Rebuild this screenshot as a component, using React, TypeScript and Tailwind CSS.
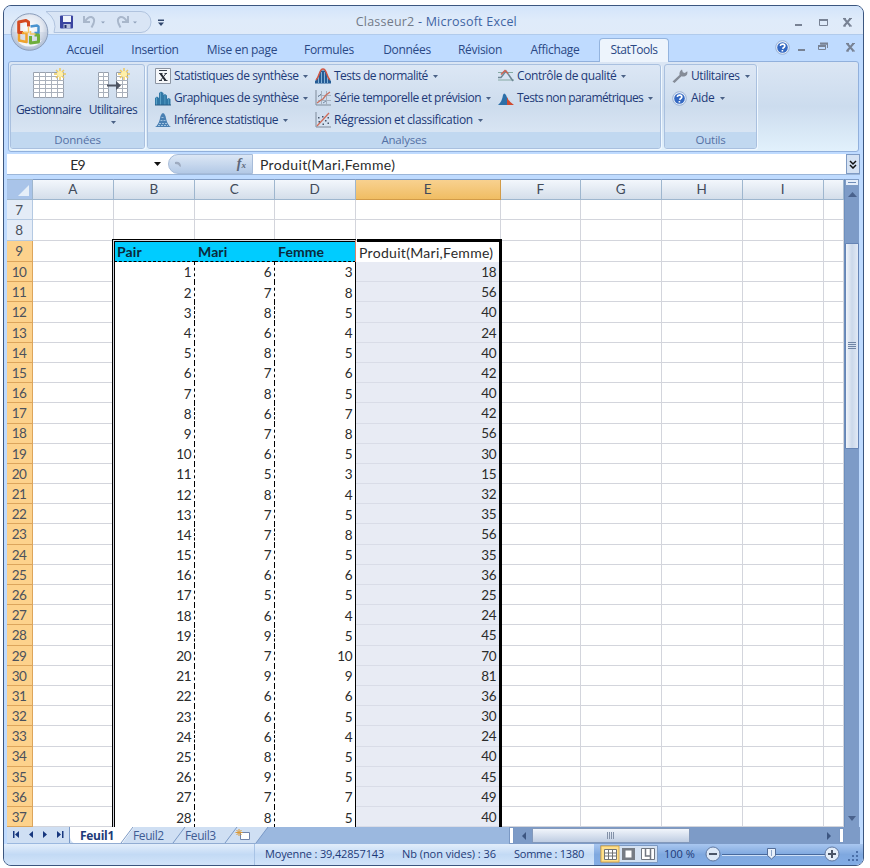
import type { ReactNode } from 'react';
import clsx from 'clsx';

const products = [
  [6, 3, 18], [7, 8, 56], [8, 5, 40], [6, 4, 24], [8, 5, 40], [7, 6, 42], [8, 5, 40],
  [6, 7, 42], [7, 8, 56], [6, 5, 30], [5, 3, 15], [8, 4, 32], [7, 5, 35], [7, 8, 56],
  [7, 5, 35], [6, 6, 36], [5, 5, 25], [6, 4, 24], [9, 5, 45], [7, 10, 70], [9, 9, 81],
  [6, 6, 36], [6, 5, 30], [6, 4, 24], [8, 5, 40], [9, 5, 45], [7, 7, 49], [8, 5, 40],
];

const columns = [
  { name: 'A', width: 'w-[81px]' },
  { name: 'B', width: 'w-[81px]' },
  { name: 'C', width: 'w-[80px]' },
  { name: 'D', width: 'w-[81px]' },
  { name: 'E', width: 'w-[145px]' },
  { name: 'F', width: 'w-[80px]' },
  { name: 'G', width: 'w-[81px]' },
  { name: 'H', width: 'w-[81px]' },
  { name: 'I', width: 'w-[81px]' },
  { name: '', width: 'w-[20px]' },
];

const tabs = [
  { label: 'Accueil', width: 'w-[60px]' },
  { label: 'Insertion', width: 'w-[80px]' },
  { label: 'Mise en page', width: 'w-[94px]' },
  { label: 'Formules', width: 'w-[80px]' },
  { label: 'Données', width: 'w-[76px]' },
  { label: 'Révision', width: 'w-[70px]' },
  { label: 'Affichage', width: 'w-[80px]' },
];

function Caret({ className }: { className?: string }) {
  return (
    <svg viewBox="0 0 5 3" className={clsx('h-[3px] w-[5px] shrink-0', className)}>
      <path d="M0 0h5L2.5 3z" fill="#4a6186" />
    </svg>
  );
}

function OfficeButton() {
  return (
    <svg viewBox="0 0 40 40" className="absolute left-[6px] top-[6px] h-10 w-10">
      <defs>
        <radialGradient id="orb" cx="50%" cy="40%" r="60%">
          <stop offset="0" stopColor="#ffffff" />
          <stop offset="0.6" stopColor="#e3e8f1" />
          <stop offset="1" stopColor="#a9b8cf" />
        </radialGradient>
      </defs>
      <circle cx="19.500" cy="20" r="18.300" fill="url(#orb)" stroke="#8b9dba" />
      <path d="M2 20h35a17.500 17.500 0 0 1-35 0z" fill="#b9c6da" opacity="0.350" />
      <path d="M7 28a14 12 0 0 0 25 0q-12 7-25 0z" fill="#fff" opacity="0.800" />
      <g fill="none" strokeLinejoin="round">
        <path d="M13 20.500H8.700V10l7.300-1.500 2.500 1.500v4.500" stroke="#d4491f" strokeWidth="3" />
        <path d="M20.500 14.500l6.500-1 1.500 1v6.500h-4" stroke="#4a93cf" strokeWidth="2.500" />
        <path d="M9 22v6.500l7.500 1.500V21H12" stroke="#f0a32c" strokeWidth="2.500" />
        <path d="M20.500 24v7l8-1v-7h-4" stroke="#6fae3c" strokeWidth="3" />
        <path d="M18.500 15v5.500H14M20.500 19v3h5" stroke="#f6c667" strokeWidth="1.500" />
      </g>
    </svg>
  );
}

function QuickAccess() {
  return (
    <svg viewBox="0 0 130 24" className="absolute left-[41px] top-[4px] h-6 w-[130px]">
      <path d="M1 1.500h95a10 10.500 0 0 1 0 21H9Q13 10 1 1.500z" fill="#d9e5f5" stroke="#b0c3de" />
      <rect x="15" y="5.500" width="13" height="13" rx="1" fill="#3a44a0" />
      <rect x="18" y="6" width="8" height="6" fill="#f1f4fb" />
      <rect x="18.500" y="14" width="7" height="4.500" fill="#b9c2dd" />
      <rect x="19.500" y="15" width="2" height="3" fill="#27306f" />
      <g fill="none" stroke="#a9b7cb" strokeWidth="2">
        <path d="M39 6v6h6M40 11.500q3-5 6.500-4.500 4 1.500 2 6.500l-2 4" />
        <path d="M83 6v6h-6M82 11.500q-3-5-6.500-4.500-4 1.500-2 6.500l2 4" />
      </g>
      <path d="M56 11.500h4l-2 2zM88 11.500h4l-2 2z" fill="#8fa0ba" />
      <path d="M113 9.500h6v1.500h-6zM113 12.500h6l-3 3.500z" fill="#33486e" />
    </svg>
  );
}

function HelpIcon({ className }: { className?: string }) {
  return (
    <svg viewBox="0 0 15 15" className={clsx('h-[15px] w-[15px] shrink-0', className)}>
      <circle cx="7.500" cy="7.500" r="6.800" fill="#e4edf9" stroke="#8ba4cc" strokeWidth="0.800" />
      <circle cx="7.500" cy="7.500" r="5.300" fill="#3468c2" />
      <path d="M5.200 5.900Q5.600 4 7.800 4.100q2.400.4 2 2.200-.3 1-1.700 1.600l-.3 1M7.400 10v1.600" fill="none" stroke="#fff" strokeWidth="1.600" />
    </svg>
  );
}

function WindowButtons({ restore }: { restore?: boolean }) {
  return (
    <svg viewBox="0 0 62 12" className="h-3 w-[62px]">
      <path d="M1 8h7v2H1z" fill="#788294" />
      {restore ? (
        <>
          <path d="M23.500 3h7v4M21.500 4.500h7v4h-7z" fill="none" stroke="#788294" />
          <path d="M23 2.500h8M21 5h8" stroke="#788294" strokeWidth="2" />
        </>
      ) : (
        <>
          <path d="M25.500 3.500h8v6h-8z" fill="none" stroke="#788294" />
          <path d="M25 4h9" stroke="#788294" strokeWidth="2" />
        </>
      )}
      <path d="M50 2.500l6.500 7.500M56.500 2.500L50 10" stroke="#788294" strokeWidth="2" />
      <path d="M49 2.500h3M55 2.500h3M49 10h3M55 10h3" stroke="#788294" />
    </svg>
  );
}

function TableIcon({ split }: { split?: boolean }) {
  const rows = [9, 13, 17, 21, 25];
  return (
    <svg viewBox="0 0 34 34" className="h-[34px] w-[34px]">
      {split ? (
        <>
          <path d="M2.500 5.500h10v25h-10zM20.500 5.500h11v25h-11z" fill="#fff" stroke="#98a1ae" />
          <path d={rows.map((y) => `M2 ${y + 0.5}h11M20 ${y + 0.5}h12`).join('')} stroke="#aab1bc" />
          <path d="M7.500 5v26M26.500 5v26" stroke="#aab1bc" />
          <path d="M11 17.500h9V14l5 4.500-5 4.500v-3.500h-9z" fill="#4e5563" />
        </>
      ) : (
        <>
          <path d="M1.500 5.500h30v25h-30z" fill="#fff" stroke="#98a1ae" />
          <path d={rows.map((y) => `M1 ${y + 0.5}h31`).join('')} stroke="#aab1bc" />
          <path d="M7.500 5v26M13.500 5v26M19.500 5v26M25.500 5v26" stroke="#aab1bc" />
        </>
      )}
      <path d="M28 1v12M22 7h12M24 3l8 8M32 3l-8 8" stroke="#ecc95f" strokeWidth="1.500" />
      <circle cx="28" cy="7" r="3" fill="#fff0a8" />
    </svg>
  );
}

const icons: Record<string, ReactNode> = {
  mean: (
    <>
      <path d="M.5.500h15v15H.5z" fill="#f5f7fa" stroke="#8b94a2" />
      <path d="M4 2.500h8" stroke="#333a45" />
      <path d="M5.500 5.500l5 7" stroke="#20242c" strokeWidth="2" />
      <path d="M11 5.500l-5.500 7M4 5.500h3.500M9.500 5.500H12M4 12.500h3M9 12.500h3.500" stroke="#333a45" />
    </>
  ),
  bars: (
    <>
      <path d="M0 15V8l2-1.500L4 8V3l2-1.500L8.500 3v2L10 4l2 1.500V9l1.500-1L15.500 9v6z" fill="#3178a6" />
      <path d="M1 15V8l1-1v8zM5 15V3l1-1v13zM9.500 15V5.500l.8-.5v10zM13 15V9l.8-.5V15z" fill="#5ba0c6" />
      <path d="M0 15h16" stroke="#285a84" />
    </>
  ),
  inference: (
    <>
      <path d="M0 15q4-2 5.500-11Q8-2 10.500 4 12 13 16 15z" fill="#4a80b3" />
      <path d="M4 11.500h8M5.500 8.500h5M3 13.500h10M6.500 5.500h3" stroke="#9fc1de" strokeDasharray="2 1" />
    </>
  ),
  normality: (
    <>
      <path d="M0 15.500V13l2-2 2-5 2-3.500h4L12 6l2 5 2 2v2.500z" fill="#245c96" />
      <path d="M3.500 15V9M6.500 15V4M9.500 15V4M12.500 15V9" stroke="#83b1d7" />
      <path d="M1 12C5 8 4 1 8 1s3 7 7 11" fill="none" stroke="#cf5644" strokeWidth="1.500" />
    </>
  ),
  series: (
    <>
      <path d="M1 0v15h15" fill="none" stroke="#7f8b9b" />
      <path d="M6.500 1v14M11.500 1v14M3 5.500h13M3 10.500h13" fill="none" stroke="#a5b0be" />
      <path d="M2 13l4-3 2-1 3-4 4-3" fill="none" stroke="#c8705f" strokeWidth="1.300" />
      <path d="M3 7l3-3M8 13l3-2" fill="none" stroke="#7489a2" />
    </>
  ),
  regression: (
    <>
      <path d="M1 0v15h15" fill="none" stroke="#7f8b9b" />
      <path d="M2 14L14 1" stroke="#cf6b58" strokeWidth="1.300" />
      <path d="M3 5h1.500v1.500H3zM3.500 9H5v1.500H3.500zM7 4h1.500v1.500H7zM7.500 11.500H9V13H7.500zM12.500 5H14v1.500h-1.500zM12.500 10.500H14V12h-1.500zM10 8h1.500v1.500H10z" fill="#47566b" />
    </>
  ),
  control: (
    <>
      <path d="M0 4.500h15M0 12h16" stroke="#86a9a3" />
      <path d="M0 9.500h3L8 3l7 10" fill="none" stroke="#6f8795" strokeWidth="1.500" />
      <path d="M3 6.500l4-4 3 3" fill="none" stroke="#ce6352" strokeWidth="1.500" />
    </>
  ),
  nonparam: (
    <>
      <path d="M0 15q4-3 5-10 1-3 3 0l2 5v5z" fill="#2d6fa8" />
      <path d="M9 7q2 5 7 8H9z" fill="#cf4b30" />
    </>
  ),
  wrench: (
    <path d="M.5 13.500l7-6.500Q7 3 10 1.500l.8 2.800 2 .7 2.500-1.800Q16 7 13 8.200q-2 .6-3.500 0l-7 6.800z" fill="#858c98" />
  ),
};

function Command({ icon, label, tracking }: { icon: string; label: string; tracking: string }) {
  return (
    <div className="flex h-[22px] items-center whitespace-nowrap">
      {icon === 'help' ? (
        <HelpIcon className="mr-1" />
      ) : (
        <svg viewBox="0 0 16 16" className="mr-[3px] h-4 w-4 shrink-0">{icons[icon]}</svg>
      )}
      <span className={tracking}>{label}</span>
      <Caret className="ml-[5px]" />
    </div>
  );
}

function Group({ title, className, children }: { title: string; className: string; children: ReactNode }) {
  return (
    <div className={clsx('flex h-[85px] flex-col overflow-hidden rounded-[3px] border border-[#a9c0df] bg-linear-to-b from-[#dce7f5] via-[#cddced] to-[#dfeaf7] shadow-[1px_1px_0_#f0f8ff]', className)}>
      <div className="h-[67px]">{children}</div>
      <div className="flex h-4 items-center justify-center bg-[#c1d8f0] text-[11.500px] tracking-[-0.200px] text-[#5571a5]">{title}</div>
    </div>
  );
}

function Ribbon() {
  return (
    <div className="mx-1 flex h-[91px] rounded-[3px] border border-[#91b0dc] bg-linear-to-b from-[#dbe6f4] via-[#ccdcee] to-[#e2f1fc] pl-px pt-[2px] text-[12px] text-[#1d3a78]">
      <Group title="Données" className="w-[135px]">
        <div className="flex pt-[2px]">
          <div className="flex w-[75px] flex-col items-center">
            <TableIcon />
            <span className="tracking-[-0.550px]">Gestionnaire</span>
          </div>
          <div className="flex w-[54px] flex-col items-center">
            <TableIcon split />
            <span className="tracking-[-0.450px]">Utilitaires</span>
            <Caret className="mt-[2px]" />
          </div>
        </div>
      </Group>
      <Group title="Analyses" className="ml-[2px] w-[514px]">
        <div className="flex pl-[7px]">
          <div className="w-[160px]">
            <Command icon="mean" label="Statistiques de synthèse" tracking="tracking-[-0.450px]" />
            <Command icon="bars" label="Graphiques de synthèse" tracking="tracking-[-0.500px]" />
            <Command icon="inference" label="Inférence statistique" tracking="tracking-[-0.500px]" />
          </div>
          <div className="w-[183px]">
            <Command icon="normality" label="Tests de normalité" tracking="tracking-[-0.550px]" />
            <Command icon="series" label="Série temporelle et prévision" tracking="tracking-[-0.470px]" />
            <Command icon="regression" label="Régression et classification" tracking="tracking-[-0.400px]" />
          </div>
          <div>
            <Command icon="control" label="Contrôle de qualité" tracking="tracking-[-0.400px]" />
            <Command icon="nonparam" label="Tests non paramétriques" tracking="tracking-[-0.600px]" />
          </div>
        </div>
      </Group>
      <Group title="Outils" className="ml-[3px] w-[93px]">
        <div className="pl-[7px]">
          <Command icon="wrench" label="Utilitaires" tracking="tracking-[-0.450px]" />
          <Command icon="help" label="Aide" tracking="tracking-[-0.300px]" />
        </div>
      </Group>
    </div>
  );
}

function FormulaBar() {
  return (
    <div className="mx-[3px] mt-[2px] flex h-[21px] border-b border-[#9cb6d8] bg-white text-[14px] text-[#2b2b2b]">
      <div className="w-[141px] pt-px text-center font-['Lato',sans-serif] leading-5 tracking-[-0.800px]">E9</div>
      <div className="flex w-5 items-center">
        <svg viewBox="0 0 7 4" className="ml-[6px] h-1 w-[7px]"><path d="M0 0h7L3.500 4z" fill="#111" /></svg>
      </div>
      <div className="flex w-[85px] items-center justify-between rounded-l-full border border-[#a7bcd9] bg-linear-to-b from-[#dce7f5] to-[#b3c9e6] pl-[6px] pr-[6px]">
        <svg viewBox="0 0 7 7" className="h-[7px] w-[7px]"><path d="M0 1q6-1 6 5l-2-1q0-2-4-2z" fill="#9eabc0" /></svg>
        <span className="font-['Liberation_Serif',serif] text-[14px] font-bold italic leading-none text-[#5d6779]">f<span className="text-[9px]">x</span></span>
      </div>
      <div className="flex-1 pl-[7px] pt-px font-['Lato',sans-serif] leading-5 tracking-[0.350px]">Produit(Mari,Femme)</div>
      <div className="flex w-[14px] items-center justify-center border border-[#7f9bc4] bg-[#d5e2f3]">
        <svg viewBox="0 0 8 9" className="h-[9px] w-2"><path d="M1 1l3 3 3-3M1 5l3 3 3-3" fill="none" stroke="#111" strokeWidth="1.500" /></svg>
      </div>
    </div>
  );
}

function RowNumber({ n, height }: { n: number; height: string }) {
  return (
    <div className={clsx('flex w-[26px] shrink-0 items-center justify-center border-b border-r pt-px pr-px text-[#4b515c]', height, n > 8 ? 'border-[#dca55c] bg-[#fdd28c]' : 'border-[#b4c9e2] bg-[#e4ecf7]')}>
      {n}
    </div>
  );
}

function Sheet() {
  const rows = Array.from({ length: 31 }, (_, i) => i + 7);
  return (
    <div className="relative flex h-[648px] w-[837px] flex-col overflow-hidden bg-white font-['Lato',sans-serif] text-[13.500px] tracking-[-0.500px] text-[#2b2b2b]">
      <div className="flex h-[21px] shrink-0 text-[#414b5a]">
        <div className="flex w-[26px] items-end justify-end border-b border-r border-t border-[#9eb6ce] bg-[#a9c4e9] p-[3px]">
          <svg viewBox="0 0 12 12" className="h-[11px] w-[11px]"><path d="M12 0v12H0z" fill="#e6eff9" /></svg>
        </div>
        {columns.map((col) => (
          <div
            key={col.name}
            className={clsx('flex items-center justify-center border-b border-r border-t border-t-[#7f9cc5] pr-px', col.width, col.name === 'E' ? 'border-[#d29b48] bg-linear-to-b from-[#f8d18f] to-[#f0bd62]' : 'border-[#9eb6ce] bg-linear-to-b from-[#f3f7fc] to-[#d4deea]')}
          >
            {col.name}
          </div>
        ))}
      </div>
      {rows.map((n) => {
        const height = n === 7 ? 'h-5' : n < 10 ? 'h-[21px]' : 'h-[20.200px]';
        const data = n > 9 ? [n - 9, ...products[n - 10]] : null;
        const heads = n === 9 ? ['Pair', 'Mari', 'Femme'] : null;
        return (
          <div key={n} className={clsx('flex shrink-0', height)}>
            <RowNumber n={n} height={height} />
            {columns.map((col, i) => {
              const inTable = i > 0 && i < 4 && n > 8;
              const inResult = i === 4 && n > 8;
              return (
                <div
                  key={col.name}
                  className={clsx(
                    'flex items-center whitespace-nowrap pt-px',
                    col.width,
                    !inTable && !inResult && 'border-b border-r border-[#d3d5dc]',
                    inTable && heads && 'border-b border-dashed border-black bg-[#00ccff] pl-[3px] text-[14px] font-bold tracking-[0.100px] text-[#0b2a3c]',
                    inTable && !heads && 'justify-end pr-[3px]',
                    inTable && !heads && i < 3 && 'border-r border-dashed border-black',
                    inTable && !heads && i === 3 && 'border-r border-transparent',
                    inResult && heads && 'pl-[3px] text-[14px] tracking-[0.300px]',
                    inResult && data && 'justify-end border-b border-[#d9dce7] bg-[#e8ebf4] pr-[5px]',
                  )}
                >
                  {inTable && (heads ? heads[i - 1] : data?.[i - 1])}
                  {inResult && (heads ? 'Produit(Mari,Femme)' : data?.[3])}
                </div>
              );
            })}
          </div>
        );
      })}
      {/* table outline and selection frame */}
      <div className="absolute left-[105px] top-[60px] h-[600px] w-[244px] border-[3px] border-r border-double border-black" />
      <div className="absolute left-[350px] top-[60px] h-[600px] w-[145px] border-r-[3px] border-t-[3px] border-black" />
      <div className="absolute left-[348px] top-[61px] h-[22px] w-px bg-[#d4836d]" />
    </div>
  );
}

function VerticalScroll() {
  return (
    <div className="flex w-[15px] flex-col items-center border-l border-[#6d8fbd] bg-[#7d9bc7]">
      <div className="flex h-[7px] w-full items-center justify-center border border-[#7f9cc5] bg-[#e5eefa]">
        <div className="h-px w-2 bg-[#6f8db8]" />
      </div>
      <svg viewBox="0 0 9 5" className="mt-[6px] h-[5px] w-[9px]"><path d="M0 5l4.500-5L9 5z" fill="#4a628c" /></svg>
      <div className="mt-[46px] flex h-[206px] w-full items-center justify-center rounded-[1px] border border-[#6584b5] bg-linear-to-r from-[#f0f4fa] via-[#cbd8ea] to-[#e1e9f5]">
        <svg viewBox="0 0 8 8" className="h-2 w-2"><path d="M0 .5h8M0 2.500h8M0 4.500h8M0 6.500h8" stroke="#7085a6" /></svg>
      </div>
      <svg viewBox="0 0 8 5" className="mt-auto mb-[6px] h-[5px] w-2"><path d="M0 0h8L4 5z" fill="#4a628c" /></svg>
    </div>
  );
}

function SheetTabs() {
  return (
    <div className="mx-[3px] flex h-[17px] items-stretch bg-[#9bb8df] font-['Open_Sans',sans-serif] text-[12px] text-[#3e5c93]">
      <div className="relative flex h-[17px] w-[262px] shrink-0">
        <svg viewBox="0 0 262 17" className="absolute inset-0 h-[17px] w-[262px]">
          <path d="M0 0h261l-12 16H0z" fill="#cfdff3" />
          <path d="M63 0h64l-12 16.500H68q-4-1-5-6z" fill="#fff" />
          <path d="M62.500 0v16M126 0l-12 16M178 0l-12 16M230 0l-12 16M261 0l-12 16" fill="none" stroke="#7998c5" />
          <path d="M63 16.500h186" stroke="#91acd2" />
          <g fill="#17377e">
            <path d="M6 4h1.500v7H6zM12 4v7L8 7.500zM26 4v7l-4-3.500zM36 4v7l4-3.500zM50 4v7l4-3.500zM55 4h1.500v7H55z" />
          </g>
          <path d="M233.500 5.500h9v7h-9z" fill="#fff" stroke="#7184aa" />
          <path d="M232 2v7M228.500 5.500h7M229.500 3l5 5M234.500 3l-5 5" stroke="#dc9a38" />
        </svg>
        <span className="relative ml-[73px] w-[53px] font-bold leading-[17px] tracking-[-0.300px] text-[#1d3a78]">Feuil1</span>
        <span className="relative w-[52px] leading-[17px] tracking-[-0.400px]">Feuil2</span>
        <span className="relative leading-[17px] tracking-[-0.400px]">Feuil3</span>
      </div>
      <div className="ml-[240px] w-[5px] border border-[#7a98c4] bg-white" />
      <div className="flex flex-1 items-center bg-[#7d9bc7] pl-2">
        <svg viewBox="0 0 4 8" className="h-2 w-1"><path d="M4 0v8L0 4z" fill="#3d5681" /></svg>
        <div className="ml-[6px] flex h-[15px] w-[158px] items-center justify-center border border-[#8399bb] bg-linear-to-b from-[#f1f5fb] to-[#bfcde2]">
          <svg viewBox="0 0 8 7" className="h-[7px] w-2"><path d="M.5 0v7M2.500 0v7M4.500 0v7M6.500 0v7" stroke="#8391a8" /></svg>
        </div>
        <svg viewBox="0 0 4 8" className="ml-auto mr-2 h-2 w-1"><path d="M0 0v8l4-4z" fill="#3d5681" /></svg>
        <div className="mr-4 h-[15px] w-[5px] border border-[#7a98c4] bg-white" />
      </div>
    </div>
  );
}

function StatusBar() {
  return (
    <div className="flex h-[21px] items-center bg-linear-to-b from-[#e3eefb] via-[#c3daf5] to-[#d2e4f9] text-[11px] text-[#1d3a78]">
      <div className="ml-[250px] h-full w-px bg-[#a8c3e5]" />
      <span className="ml-[10px] w-[137px] whitespace-nowrap tracking-[-0.150px]">Moyenne : 39,42857143</span>
      <span className="w-[112px] whitespace-nowrap tracking-[-0.050px]">Nb (non vides) : 36</span>
      <span className="w-[80px] whitespace-nowrap tracking-[-0.250px]">Somme : 1380</span>
      <div className="flex h-full flex-1 items-center bg-linear-to-b from-[#a9c7f0] via-[#7fa8df] to-[#83ade5] pl-[6px]">
        <svg viewBox="0 0 58 19" className="h-[19px] w-[58px] shrink-0">
          <path d="M.5.500h57v17H.5z" fill="#d5e2f2" stroke="#7c99c2" />
          <path d="M1 1h18v16H1z" fill="#ffe08b" stroke="#d7a94c" />
          <path d="M4.500 4.500h12v10h-12zM4 8h13M4 11h13M8.500 4v11M12.500 4v11" fill="#fff" stroke="#707274" />
          <path d="M22 3h13v12H22z" fill="#777c84" />
          <path d="M25.500 5.500h6v7h-6z" fill="#fff" />
          <path d="M41.500 3.500h13v11h-13z" fill="#fff" stroke="#707680" />
          <path d="M45.500 4v7h5V4M50.500 11v3" fill="none" stroke="#707680" strokeWidth="1.500" />
        </svg>
        <span className="ml-[6px] w-[38px] shrink-0 whitespace-nowrap">100 %</span>
        <svg viewBox="0 0 160 21" className="h-[21px] w-[160px] shrink-0">
          <path d="M20 10.500h104" stroke="#47699d" />
          <path d="M20 11.500h104" stroke="#cfe1f8" />
          <circle cx="11" cy="10" r="7" fill="#dce8f7" stroke="#6078a1" />
          <path d="M7 10h8" stroke="#4a5568" strokeWidth="2" />
          <path d="M65.500 4.500h8v7l-4 3.500-4-3.500z" fill="#e8f0fa" stroke="#536d99" />
          <path d="M69.500 6v6" stroke="#8ea5c8" />
          <circle cx="130" cy="10" r="7" fill="#e3edf9" stroke="#6078a1" />
          <path d="M126 10h8M130 6v8" stroke="#4a5568" strokeWidth="2" />
          <path d="M154 7h2v2h-2zM150 11h2v2h-2zM154 11h2v2h-2zM146 15h2v2h-2zM150 15h2v2h-2zM154 15h2v2h-2z" fill="#4a6fa8" />
        </svg>
      </div>
    </div>
  );
}

export default function App() {
  return (
    <div className="h-[868px] w-[870px] overflow-hidden bg-white pl-[3px] pt-[5px] font-['Open_Sans',sans-serif]">
      <div className="relative h-[861px] w-[861px] overflow-hidden rounded-[8px] border border-[#3c567f] bg-[#bfdbff]">
        <div className="flex h-7 items-center justify-end bg-linear-to-b from-[#d3e4fa] via-[#dfebfa] to-[#e0ebf9]">
          <div className="mr-[277px] mt-[5px] whitespace-pre text-[12.500px] tracking-[0.220px] text-[#3f65a4]">
            <span className="text-[#727a88]">Classeur2</span> - Microsoft Excel
          </div>
          <div className="mr-[7px] mt-[3px] flex"><WindowButtons /></div>
        </div>
        <div className="flex h-[27px] border-t border-[#b1cbec] bg-[#bfdbff] pl-[51px] text-[12px] text-[#2a4884]">
          {tabs.map((tab) => (
            <div key={tab.label} className={clsx('whitespace-nowrap pt-[6px] text-center tracking-[-0.300px]', tab.width)}>{tab.label}</div>
          ))}
          <div className="relative z-10 ml-1 mt-[3px] h-6 w-[70px] rounded-t-[4px] border border-b-0 border-[#94b4de] bg-[#edf4fc] pt-[2px] text-center tracking-[-0.500px]">StatTools</div>
          <HelpIcon className="ml-[106px] mt-[5px]" />
          <div className="ml-[7px] mt-[6px]"><WindowButtons restore /></div>
        </div>
        <OfficeButton />
        <QuickAccess />
        <Ribbon />
        <FormulaBar />
        <div className="mx-[3px] mt-1 flex h-[648px]">
          <Sheet />
          <VerticalScroll />
        </div>
        <SheetTabs />
        <StatusBar />
      </div>
    </div>
  );
}
